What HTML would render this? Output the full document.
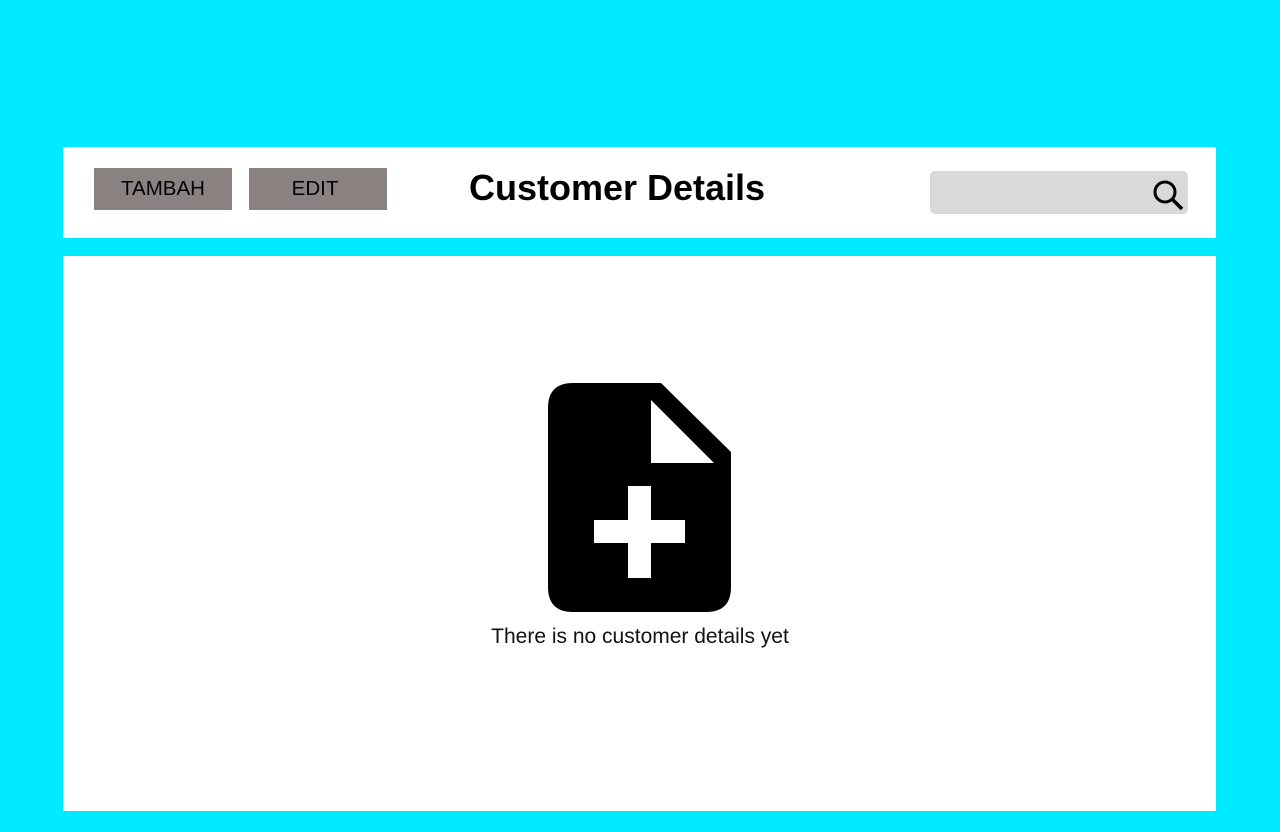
<!DOCTYPE html>
<html><head><style>
body{margin:0;width:1280px;height:832px;background:#00ebff;position:relative;overflow:hidden;font-family:"Liberation Sans",sans-serif}
.p{position:absolute;background:#fff}
.b{position:absolute;top:168px;height:42px;width:138px;background:#8a8181;color:#000;font-size:20.5px;text-align:center;line-height:42px}
</style></head><body>
<div class="p" style="left:63px;top:147px;width:1153px;height:91px"></div>
<div class="p" style="left:63px;top:256px;width:1153px;height:555px"></div>
<div class="b" style="left:94px">TAMBAH</div>
<div class="b" style="left:249px;text-indent:-6px">EDIT</div>
<div style="position:absolute;left:442px;width:350px;top:167px;text-align:center;font-size:36px;font-weight:bold">Customer Details</div>
<div style="position:absolute;left:930px;top:171px;width:258px;height:43px;background:#d9d9d9;border-radius:5px"></div>
<svg style="position:absolute;left:0;top:0" width="1280" height="832">
<circle cx="1165" cy="192" r="10" fill="none" stroke="#000" stroke-width="3"/>
<line x1="1172" y1="199" x2="1182" y2="209" stroke="#000" stroke-width="3.5"/>
<path d="M573 383 H661 L731 452 V587 Q731 612 706 612 H573 Q548 612 548 587 V408 Q548 383 573 383 Z" fill="#000"/>
<path d="M651 400 V463 H714 Z" fill="#fff"/>
<rect x="628" y="486" width="23" height="92" fill="#fff"/>
<rect x="594" y="520" width="91" height="23" fill="#fff"/>
</svg>
<div style="position:absolute;left:390px;width:500px;top:625px;text-align:center;font-size:21px;color:#111">There is no customer details yet</div>
</body></html>
